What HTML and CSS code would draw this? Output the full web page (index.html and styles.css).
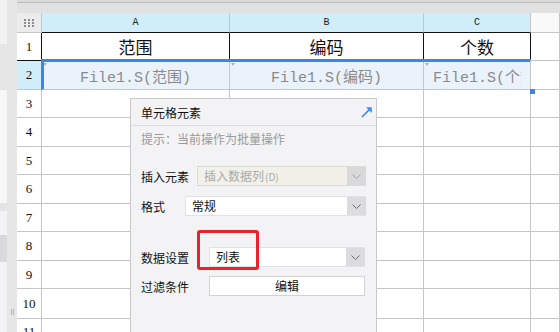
FILE: index.html
```html
<!DOCTYPE html>
<html lang="zh">
<head>
<meta charset="utf-8">
<link rel="stylesheet" href="styles.css">
</head>
<body>
<div class="app">
  <aside class="side">
    <div class="s1"></div><div class="s2"></div><div class="s3"></div><div class="s4"></div><div class="s5"></div><div class="s6"></div><div class="s7"></div>
  </aside>
  <div class="gutter"><span class="grip"></span></div>
  <main class="sheet">
    <div class="topbar"></div>
    <div class="grid">
      <div class="corner"><svg width="10" height="8" viewBox="0 0 10 8"><g fill="#8e8e8e"><rect x="0" y="0" width="2" height="2"/><rect x="4" y="0" width="2" height="2"/><rect x="8" y="0" width="2" height="2"/><rect x="0" y="3" width="2" height="2"/><rect x="4" y="3" width="2" height="2"/><rect x="8" y="3" width="2" height="2"/><rect x="0" y="6" width="2" height="2"/><rect x="4" y="6" width="2" height="2"/><rect x="8" y="6" width="2" height="2"/></g></svg></div>
      <div class="ch sel blk">A</div><div class="ch sel blk">B</div><div class="ch sel blk">C</div><div class="ch"></div>

      <div class="rh blk-r">1</div>
      <div class="c title blk-r">范围</div><div class="c title blk-r">编码</div><div class="c title blk-r">个数</div><div class="c"></div>

      <div class="rh sel">2</div>
      <div class="c data mark">File1.S(范围)</div><div class="c data mark">File1.S(编码)</div><div class="c data mark left"><span class="clip">File1.S(个数)</span></div><div class="c"></div>

      <div class="rh">3</div><div class="c"></div><div class="c"></div><div class="c"></div><div class="c"></div>
      <div class="rh">4</div><div class="c"></div><div class="c"></div><div class="c"></div><div class="c"></div>
      <div class="rh">5</div><div class="c"></div><div class="c"></div><div class="c"></div><div class="c"></div>
      <div class="rh">6</div><div class="c"></div><div class="c"></div><div class="c"></div><div class="c"></div>
      <div class="rh">7</div><div class="c"></div><div class="c"></div><div class="c"></div><div class="c"></div>
      <div class="rh">8</div><div class="c"></div><div class="c"></div><div class="c"></div><div class="c"></div>
      <div class="rh">9</div><div class="c"></div><div class="c"></div><div class="c"></div><div class="c"></div>
      <div class="rh">10</div><div class="c"></div><div class="c"></div><div class="c"></div><div class="c"></div>
      <div class="rh last">11</div><div class="c"></div><div class="c"></div><div class="c"></div><div class="c"></div>

      <div class="selection"><span class="handle"></span></div>

      <section class="panel">
        <header class="panel-head">
          <span>单元格元素</span>
          <svg class="pop" width="12" height="12" viewBox="0 0 12 12"><path d="M1.5 10.5 L8.6 3.4" stroke="#3d8ef0" stroke-width="1.7" stroke-linecap="round"/><path d="M5 1.2 H10.8 V7 Z" fill="#3d8ef0"/></svg>
        </header>
        <div class="hint">提示：当前操作为批量操作</div>
        <div class="field f-insert">
          <span class="lbl w56">插入元素</span>
          <div class="select disabled"><span class="val">插入数据列<small>(D)</small></span><span class="btn"><svg width="9" height="5" viewBox="0 0 9 5"><path d="M0.5 0.5 L4.5 4.5 L8.5 0.5" fill="none" stroke="#a5a5a8" stroke-width="1"/></svg></span></div>
        </div>
        <div class="field f-format">
          <span class="lbl w44">格式</span>
          <div class="select"><span class="val">常规</span><span class="btn"><svg width="9" height="5" viewBox="0 0 9 5"><path d="M0.5 0.5 L4.5 4.5 L8.5 0.5" fill="none" stroke="#6e6e72" stroke-width="1"/></svg></span></div>
        </div>
        <div class="field f-data">
          <span class="lbl w68">数据设置</span>
          <div class="select"><span class="val">列表</span><span class="btn"><svg width="9" height="5" viewBox="0 0 9 5"><path d="M0.5 0.5 L4.5 4.5 L8.5 0.5" fill="none" stroke="#6e6e72" stroke-width="1"/></svg></span></div>
        </div>
        <div class="field f-filter">
          <span class="lbl w68">过滤条件</span>
          <div class="button">编辑</div>
        </div>
        <div class="highlight"></div>
      </section>
    </div>
  </main>
</div>
</body>
</html>
```
FILE: styles.css
```css
html, body {
  margin: 0;
  padding: 0;
  width: 560px;
  height: 332px;
  overflow: hidden;
  background: #ffffff;
  font-family: "Noto Sans CJK SC", "Noto Sans", sans-serif;
}

.app {
  display: flex;
  height: 332px;
  overflow: hidden;
}

/* left side strip */
.side {
  width: 7px;
  display: flex;
  flex-direction: column;
}
.s1 { height: 44px; background: #f2f2f3; }
.s2 { height: 46px; background: #e6e6e6; }
.s3 { height: 113px; background: #f7f7f7; }
.s4 { height: 8px; background: #e4e4e4; }
.s5 { height: 24px; background: #f3f3f5; }
.s6 { height: 27px; background: #d9d9dd; }
.s7 { flex: 1; background: #f3f3f5; }

.gutter {
  width: 10px;
  background: #e6e6e6;
  display: flex;
  flex-direction: column;
  justify-content: flex-end;
  align-items: center;
  padding-bottom: 17px;
  box-sizing: border-box;
}
.grip {
  width: 3px;
  height: 6px;
  border-left: 1px solid #b4b4b4;
  border-right: 1px solid #b4b4b4;
  box-sizing: border-box;
}

.sheet {
  flex: 1;
  display: flex;
  flex-direction: column;
  min-width: 0;
  overflow: hidden;
}

.topbar {
  height: 13px;
  flex: none;
  background: linear-gradient(#dadada 0 2px, #bdbdbd 2px 3px, #e1e1e1 3px);
}

.grid {
  position: relative;
  flex: 1;
  min-height: 0;
  overflow: hidden;
  display: grid;
  grid-template-columns: 25px 188px 194px 107px 1fr;
  grid-template-rows: 20px 28px 29px 28px 29px 28px 29px 28px 29px 28px 30px 14px;
}

.grid > div {
  box-sizing: border-box;
  border-right: 1px solid #c6c6c6;
  border-bottom: 1px solid #c6c6c6;
}

.corner {
  background: #ececec;
  display: flex;
  align-items: center;
  justify-content: center;
}

.ch {
  background: #f9f9f9;
  font-family: "Liberation Mono", monospace;
  font-size: 10px;
  color: #222;
  display: flex;
  align-items: center;
  justify-content: center;
}
.ch.sel { background: #cfeef9; }
.ch.blk { border-bottom-color: #111 !important; }

.rh {
  background: #ffffff;
  font-family: "Liberation Serif", serif;
  font-size: 13px;
  color: #111;
  display: flex;
  align-items: center;
  justify-content: center;
}
.rh.sel { background: #cfeef9; }
.rh.last { align-items: flex-start; padding-top: 6px; line-height: 13px; }

.c {
  background: #ffffff;
  display: flex;
  align-items: center;
  justify-content: center;
  overflow: hidden;
  white-space: nowrap;
}

.blk-r { border-right-color: #111 !important; border-bottom-color: #111 !important; }

.title {
  font-size: 17px;
  color: #111;
}

.data {
  background: #eaf3fc;
  color: #8a8a8a;
  font-family: "Liberation Mono", "Noto Sans CJK SC", monospace;
  font-size: 15px;
  position: relative;
  padding-top: 1px;
}
.data.left {
  justify-content: flex-start;
  padding-left: 9px;
}
.clip {
  display: block;
  width: 88px;
  overflow: hidden;
}
.mark::before {
  content: "";
  position: absolute;
  left: 1px;
  top: 2px;
  border-left: 2px solid transparent;
  border-right: 2px solid transparent;
  border-top: 3px solid #b2b2b2;
}

.selection {
  position: absolute;
  left: 24px;
  top: 46px;
  width: 490px;
  height: 31px;
  border: 3px solid #3d87e2;
  box-sizing: border-box;
  pointer-events: none;
}
.handle {
  position: absolute;
  right: -5px;
  bottom: -5px;
  width: 5px;
  height: 5px;
  background: #3d87e2;
}

/* floating panel */
.panel {
  position: absolute;
  left: 113px;
  top: 85px;
  width: 247px;
  height: 236px;
  background: #f3f3f5;
  border: 1px solid #c9c9cc;
  border-bottom: none;
  box-sizing: border-box;
  font-size: 12px;
  color: #111;
}
.panel-head {
  height: 26px;
  border-bottom: 1px solid #dcdcdf;
  display: flex;
  align-items: center;
  justify-content: space-between;
  padding: 0 3px 0 10px;
}
.pop { margin-top: -1px; }

.hint {
  height: 26px;
  line-height: 26px;
  padding-left: 10px;
  color: #9a9a9a;
}

.field {
  display: flex;
  align-items: center;
  height: 20px;
  padding: 0 10px;
}
.f-insert { margin-top: 14px; }
.f-format { margin-top: 10px; }
.f-data { margin-top: 31px; padding-right: 11px; }
.f-filter { margin-top: 9px; padding-right: 11px; }

.lbl { flex: none; }
.w44 { width: 44px; }
.w56 { width: 56px; }
.w68 { width: 68px; }

.select {
  flex: 1;
  height: 20px;
  display: flex;
  background: #ffffff;
  border: 1px solid #e2e2e4;
  border-right: none;
  box-sizing: border-box;
}
.select .val {
  flex: 1;
  padding-left: 6px;
  line-height: 18px;
  white-space: nowrap;
}
.select .btn {
  width: 19px;
  background: #dcdcde;
  display: flex;
  align-items: center;
  justify-content: center;
}
.select.disabled {
  background: #f1f1ea;
  border-color: #dcdcd6;
}
.select.disabled .val { color: #a9a9a9; }
.select.disabled small { font-size: 10px; margin-left: 1px; }
.select.disabled .btn { background: #d9d9dc; }

.button {
  flex: 1;
  height: 20px;
  line-height: 18px;
  background: #ffffff;
  border: 1px solid #d3d3d6;
  box-sizing: border-box;
  text-align: center;
}

.highlight {
  position: absolute;
  left: 66px;
  top: 131px;
  width: 62px;
  height: 40px;
  border: 3px solid #e8232c;
  border-radius: 3px;
  box-sizing: border-box;
}
```
